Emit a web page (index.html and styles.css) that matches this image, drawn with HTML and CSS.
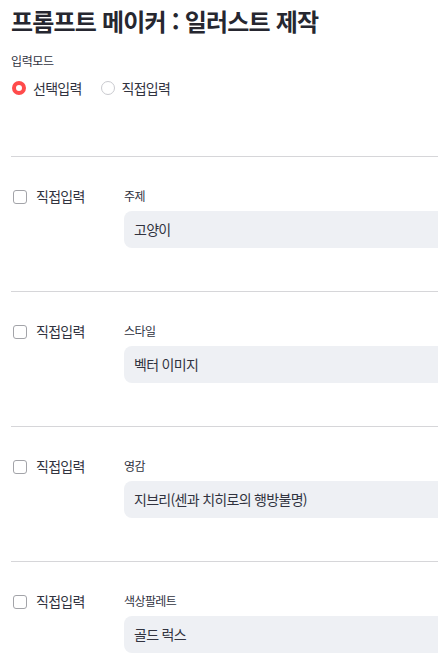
FILE: index.html
```html
<!DOCTYPE html>
<html lang="ko">
<head>
<meta charset="utf-8">
<title>프롬프트 메이커</title>
<link rel="stylesheet" href="styles.css">
</head>
<body>
<div class="app">
  <h1 class="title">프롬프트 메이커 : 일러스트 제작</h1>
  <div class="mode-label">입력모드</div>
  <div class="radios">
    <label class="radio"><span class="radio-dot on"></span><span>선택입력</span></label>
    <label class="radio"><span class="radio-dot"></span><span>직접입력</span></label>
  </div>

  <hr class="divider">
  <div class="section">
    <div class="left"><span class="checkbox"></span><span>직접입력</span></div>
    <div class="right">
      <div class="field-label">주제</div>
      <div class="input">고양이</div>
    </div>
  </div>

  <hr class="divider">
  <div class="section">
    <div class="left"><span class="checkbox"></span><span>직접입력</span></div>
    <div class="right">
      <div class="field-label">스타일</div>
      <div class="input">벡터 이미지</div>
    </div>
  </div>

  <hr class="divider">
  <div class="section">
    <div class="left"><span class="checkbox"></span><span>직접입력</span></div>
    <div class="right">
      <div class="field-label">영감</div>
      <div class="input">지브리(센과 치히로의 행방불명)</div>
    </div>
  </div>

  <hr class="divider">
  <div class="section">
    <div class="left"><span class="checkbox"></span><span>직접입력</span></div>
    <div class="right">
      <div class="field-label">색상팔레트</div>
      <div class="input">골드 럭스</div>
    </div>
  </div>
</div>
</body>
</html>
```

FILE: styles.css
```css
html, body {
  margin: 0;
  padding: 0;
  overflow: hidden;
  background: #ffffff;
}
body {
  font-family: "Noto Sans CJK KR", "Noto Sans", sans-serif;
  color: #31333f;
}
.app {
  width: 470px;
  padding-left: 11px;
}
.title {
  margin: 0;
  padding-top: 6px;
  font-size: 24px;
  line-height: 30px;
  font-weight: 700;
  letter-spacing: -0.8px;
  color: #262730;
}
.mode-label {
  margin-top: 16px;
  font-size: 12px;
  line-height: 18px;
  letter-spacing: -0.4px;
}
.radios {
  margin-top: 8px;
  display: flex;
  gap: 18px;
  font-size: 14px;
  line-height: 20px;
  letter-spacing: -0.75px;
}
.radio {
  display: flex;
  align-items: center;
  gap: 7px;
}
.radio-dot {
  width: 14px;
  height: 14px;
  border-radius: 50%;
  border: 1px solid #c9cacf;
  box-sizing: border-box;
  margin-left: 1px;
}
.radio-dot.on {
  border: 4.5px solid #ff4b4b;
  background: #ffffff;
}
.divider {
  margin: 58px 0 0 0;
  border: 0;
  border-top: 1px solid #d6d6d9;
  height: 0;
}
.section {
  display: flex;
  padding-top: 29px;
  padding-bottom: 43px;
}
.section + .divider {
  margin-top: 0;
}
.left {
  width: 113px;
  flex: none;
  display: flex;
  align-items: center;
  gap: 9px;
  height: 20px;
  font-size: 14px;
  line-height: 20px;
  letter-spacing: -0.75px;
}
.checkbox {
  width: 14px;
  height: 14px;
  box-sizing: border-box;
  border: 1px solid #a3a4a9;
  border-radius: 3px;
  margin-left: 2px;
  margin-top: 2px;
}
.right {
  flex: 1;
}
.field-label {
  font-size: 12px;
  line-height: 20px;
  letter-spacing: -0.6px;
}
.input {
  margin-top: 5px;
  height: 37px;
  box-sizing: border-box;
  background: #eef0f4;
  border-radius: 8px;
  padding-left: 10px;
  font-size: 14px;
  line-height: 37px;
  letter-spacing: -0.7px;
}
```
